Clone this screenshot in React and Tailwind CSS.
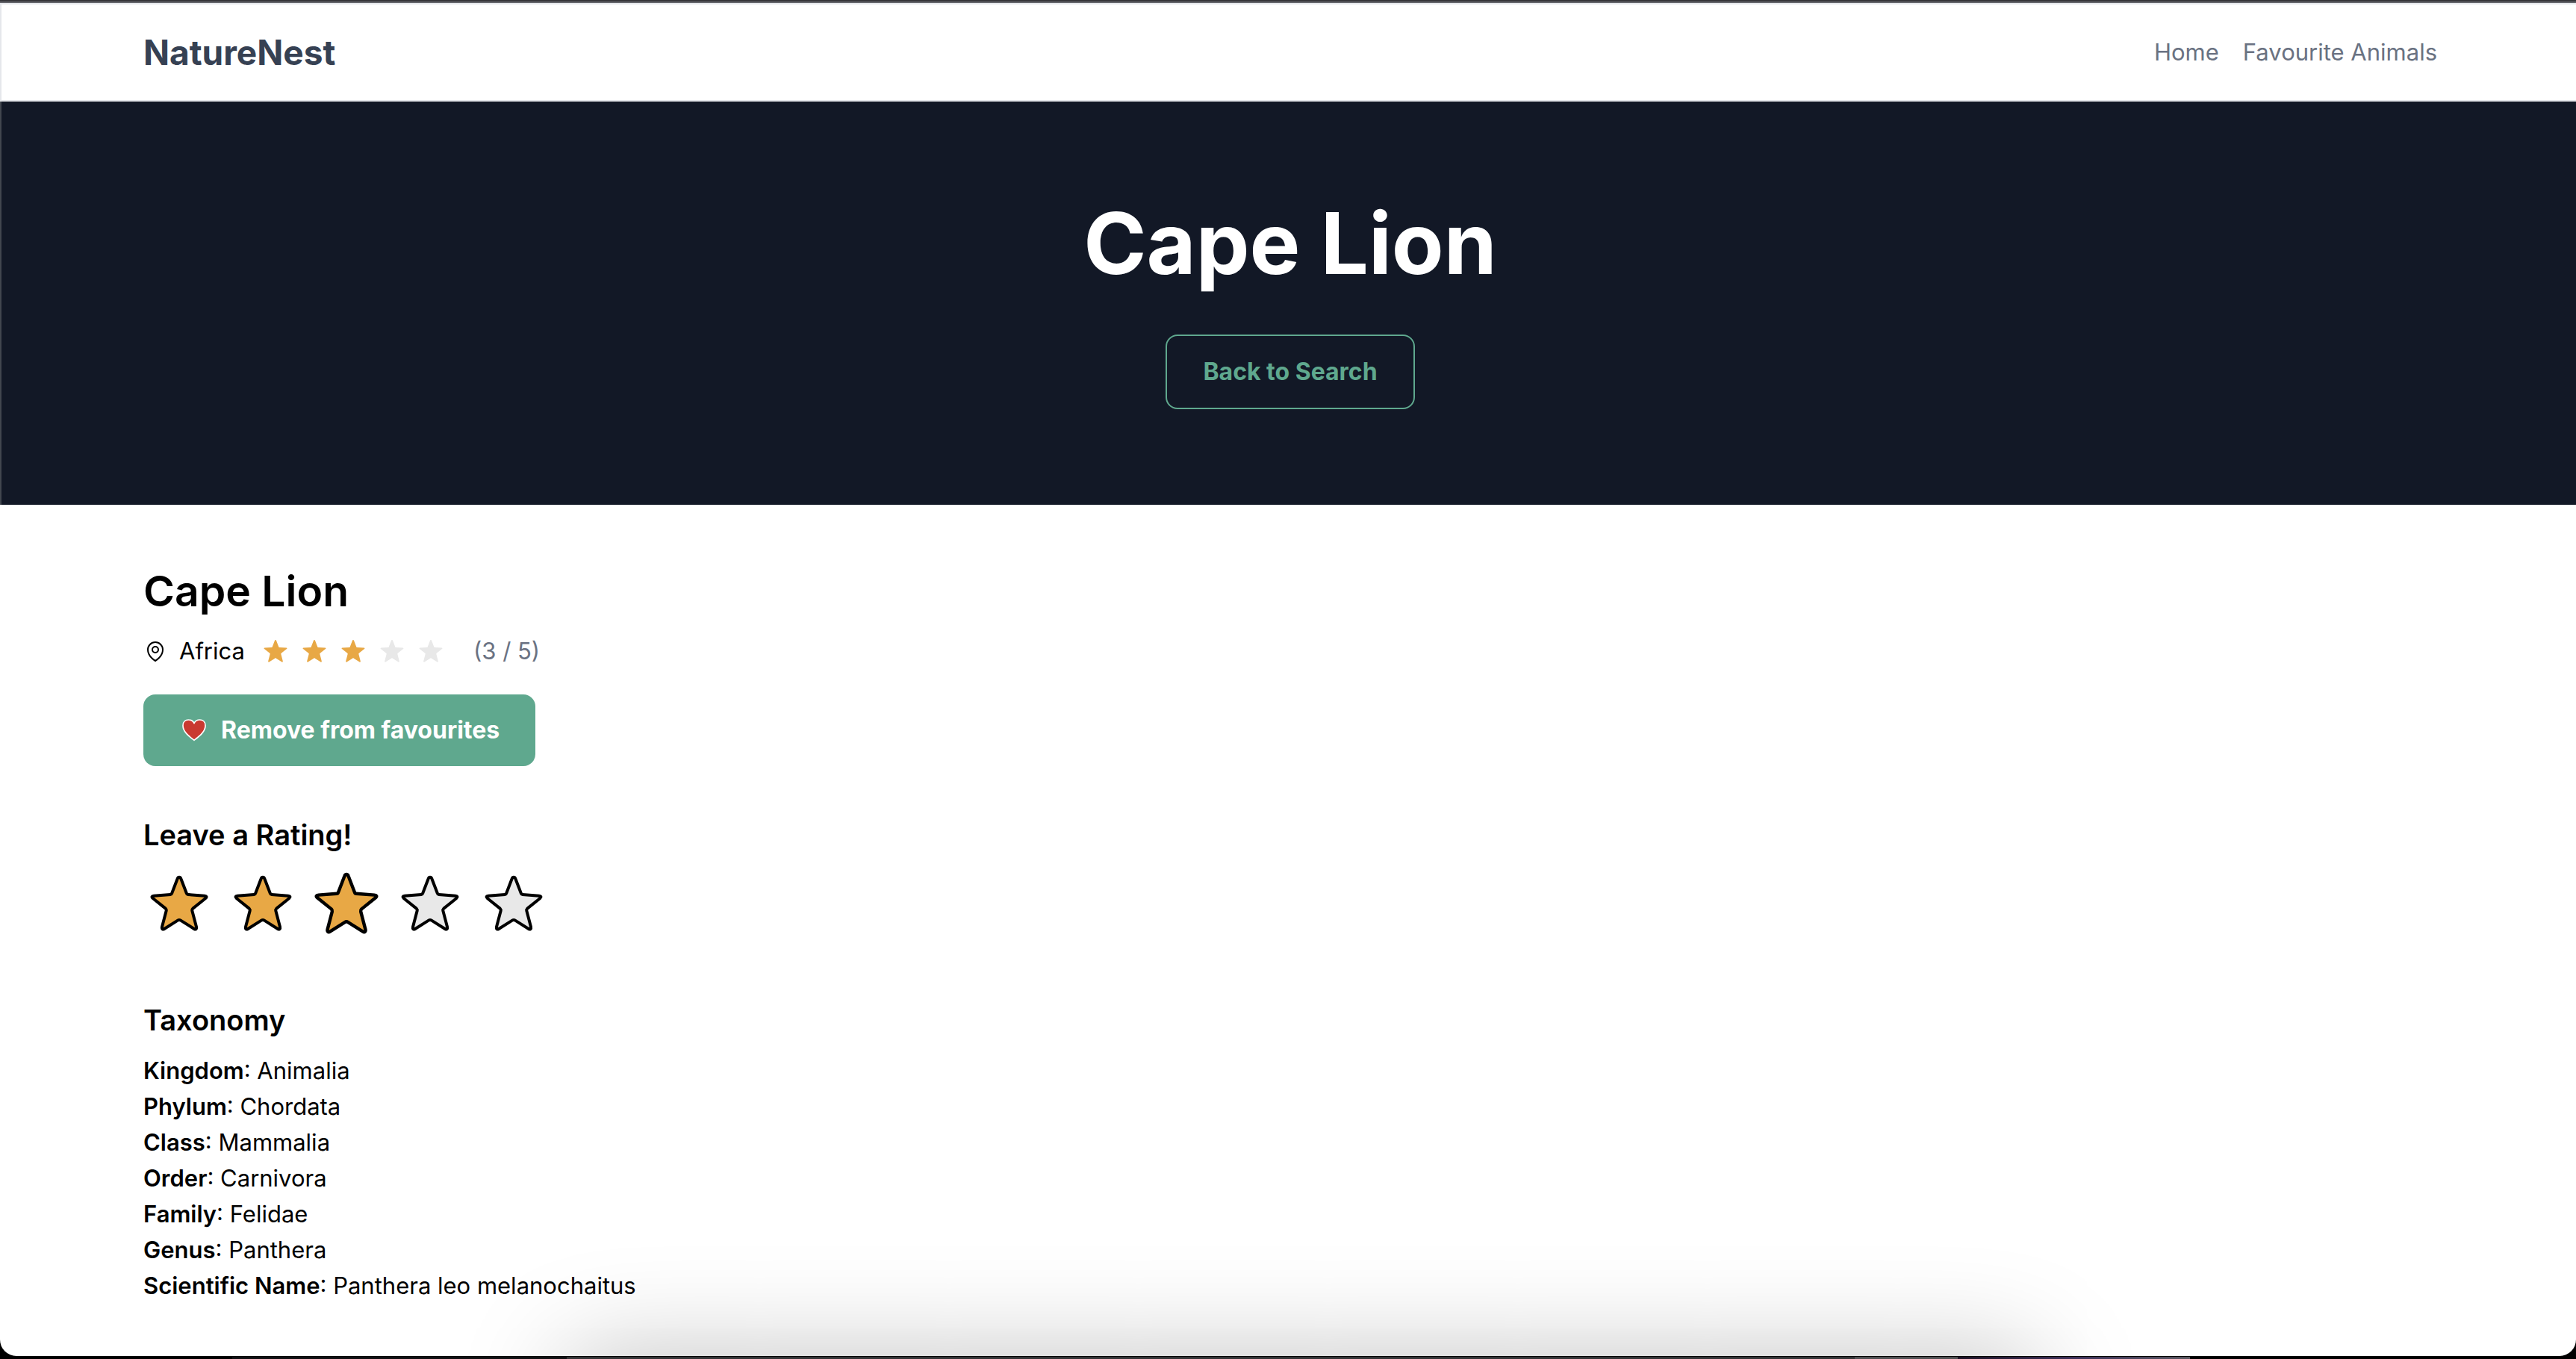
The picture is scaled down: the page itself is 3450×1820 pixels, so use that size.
const STAR =
  "M150 44 C146 44 144 47 143 50 L120 110 C119 113 118 114 115 114 L48 119 C40 119.5 38 124 44 129 L95 170 C98 173 99 175 98 179 L81 244 C79 252 84 256 90 252 L144 218 C148 215.5 152 215.5 156 218 L210 252 C216 256 221 252 219 244 L202 179 C201 175 202 173 205 170 L256 129 C262 124 260 119.5 252 119 L185 114 C182 114 181 113 180 110 L157 50 C156 47 154 44 150 44 Z";

const taxonomy = [
  ["Kingdom", "Animalia"],
  ["Phylum", "Chordata"],
  ["Class", "Mammalia"],
  ["Order", "Carnivora"],
  ["Family", "Felidae"],
  ["Genus", "Panthera"],
  ["Scientific Name", "Panthera leo melanochaitus"],
];

function Star({ filled, outlined, className }) {
  return (
    <svg viewBox={outlined ? "6 6 288 288" : "30 30 240 240"} className={className} aria-hidden="true">
      <path
        d={STAR}
        fill={filled ? "#e8a845" : "#e8e8e8"}
        stroke={outlined ? "#000" : "none"}
        strokeWidth="12"
        strokeLinejoin="round"
      />
    </svg>
  );
}

export default function App() {
  return (
    <div className="bg-black font-['Inter',sans-serif] text-[31px] leading-[48px] text-black">
      <div className="h-1 border-b-2 border-[#65666b] bg-[#353539]" />
      <div className="relative flex min-h-[calc(100vh-8px)] flex-col overflow-hidden rounded-b-[22px] bg-white">
        <header className="flex h-[132px] items-center justify-between border-y-2 border-l-2 border-gray-200 pr-[186px] pl-[190px]">
          <a href="#" className="text-[46px] font-bold text-gray-700">NatureNest</a>
          <nav className="flex gap-8 text-gray-500">
            <a href="#">Home</a>
            <a href="#">Favourite Animals</a>
          </nav>
        </header>
        <section className="flex flex-col items-center border-l-2 border-[#41464f] bg-[#121826] py-32 pl-1 text-center">
          <h1 className="text-[114px] leading-[124px] font-bold text-white">Cape Lion</h1>
          <button className="mt-15 h-[100px] rounded-2xl border-2 border-[#5fa88e] px-12 text-[32px] font-bold text-[#5fa88e]">
            Back to Search
          </button>
        </section>
        <main className="px-48 pt-20">
          <h2 className="text-[57px] leading-[72px] font-semibold">Cape Lion</h2>
          <div className="mt-5 flex items-center">
            <svg viewBox="0 0 24 24" className="size-8" fill="none" stroke="currentColor" strokeWidth="1.5" aria-hidden="true">
              <circle cx="12" cy="10.5" r="3" />
              <path d="M19.5 10.5c0 7.142-7.5 11.25-7.5 11.25S4.5 17.642 4.5 10.5a7.5 7.5 0 1 1 15 0Z" />
            </svg>
            <span className="ml-4">Africa</span>
            <div className="ml-6 flex gap-[18px]">
              {[1, 2, 3, 4, 5].map((n) => (
                <Star key={n} filled={n <= 3} className="size-[34px]" />
              ))}
            </div>
            <span className="ml-10 text-gray-500">(3 / 5)</span>
          </div>
          <button className="mt-[34px] flex h-24 items-center gap-4 rounded-2xl bg-[#5fa88e] px-12 text-[32px] font-bold text-white">
            <svg viewBox="30 25 120 120" className="size-10" aria-hidden="true">
              <path
                d="M90 125 C72 111 45 92 45 66 C45 50 56 43 67 43 C78 43 86 48 90 57 C94 48 102 43 113 43 C124 43 135 50 135 66 C135 92 108 111 90 125 Z"
                fill="#c93a30"
                stroke="#fff"
                strokeWidth="5"
                strokeLinejoin="round"
              />
            </svg>
            Remove from favourites
          </button>
          <h3 className="mt-16 text-[38px] leading-[56px] font-semibold">Leave a Rating!</h3>
          <div className="mt-4 flex gap-4">
            {[1, 2, 3, 4, 5].map((n) => (
              <button key={n} aria-label={`Rate ${n}`} className="flex size-24 items-center justify-center">
                <Star filled={n <= 3} outlined className={n === 3 ? "size-[106px] shrink-0" : "size-24 shrink-0"} />
              </button>
            ))}
          </div>
          <h3 className="mt-20 text-[38px] leading-[56px] font-semibold">Taxonomy</h3>
          <ul className="mt-4">
            {taxonomy.map(([k, v]) => (
              <li key={k}>
                <b className="font-semibold">{k}</b>: {v}
              </li>
            ))}
          </ul>
        </main>
        <div className="pointer-events-none absolute -bottom-40 left-[22%] h-40 w-[57%] rounded-3xl shadow-[0_0_140px_0_rgba(0,0,0,0.25)]" />
      </div>
      <div className="flex h-1 pt-px">
        <div className="w-[9%]" />
        <div className="w-[13%] bg-[#101012]" />
        <div className="w-[50%] bg-[#343436]" />
        <div className="w-[4%] bg-[#505052]" />
        <div className="w-[9%] bg-linear-to-r from-[#1c1224] via-[#3c3058] to-[#5a5860]" />
      </div>
    </div>
  );
}
